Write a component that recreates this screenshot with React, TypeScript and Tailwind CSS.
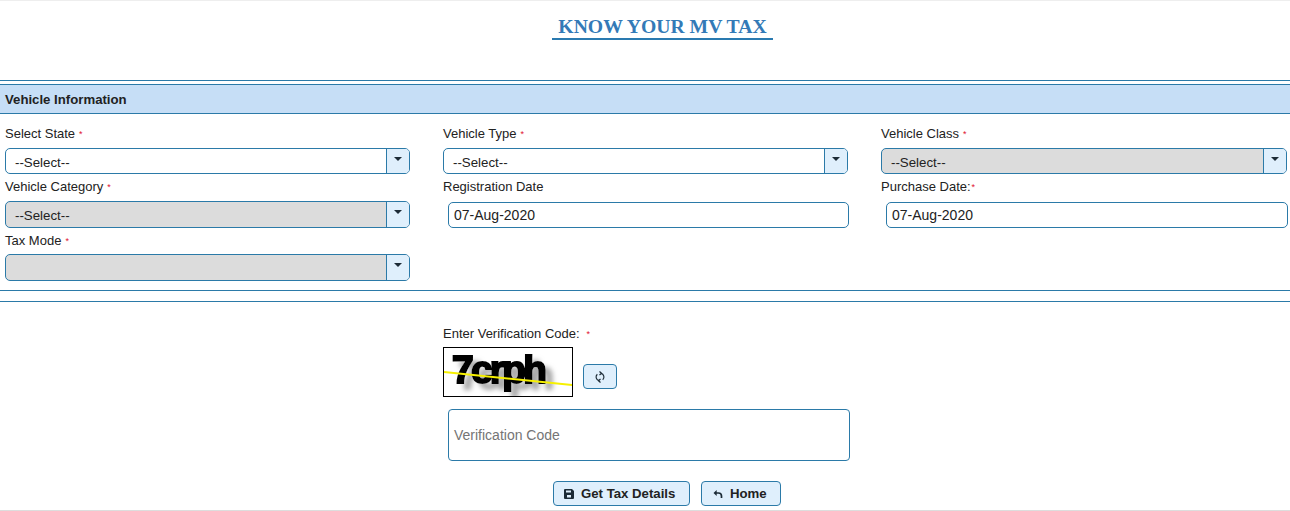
const FONT = "font-['Liberation_Sans',Arial,sans-serif]"
const BORDER = 'border-[#2b7aa8]'

function Req({ gap = 'ml-1' }: { gap?: string }) {
  return <span className={`${gap} relative -top-px text-[9px] text-[#e0102f]`}>*</span>
}

function Field({ label, required, tightStar, children }: { label: string; required?: boolean; tightStar?: boolean; children: React.ReactNode }) {
  return (
    <div>
      <label className="block h-[20px] text-[13px] leading-[20px] text-[#222]">
        {label}
        {required && <Req gap={tightStar ? 'ml-px' : 'ml-1'} />}
      </label>
      {children}
    </div>
  )
}

function SelectBox({ value, disabled, className }: { value?: string; disabled?: boolean; className: string }) {
  return (
    <div className={`flex overflow-hidden rounded-[5px] border ${BORDER} ${className} ${disabled ? 'bg-[#dcdcdc]' : 'bg-white'}`}>
      <span className="flex-1 pl-[9px] pt-[3px] text-[13.3px] leading-[22px] text-[#222]">{value}</span>
      <span className={`flex w-[23px] justify-center border-l ${BORDER} bg-[#dfeffc] pt-[8px]`}>
        <span className="h-0 w-0 border-x-[4px] border-t-[4px] border-x-transparent border-t-[#1c2b36]" />
      </span>
    </div>
  )
}

function DateBox({ value, className }: { value: string; className: string }) {
  return (
    <div className={`h-[26px] rounded-[5px] border ${BORDER} bg-white pl-[5px] text-[14px] leading-[25px] text-[#222] ${className}`}>
      {value}
    </div>
  )
}

function Captcha() {
  return (
    <svg width="130" height="50" className="block border border-black bg-white">
      <defs>
        <filter id="shade" x="-10%" y="-20%" width="125%" height="150%">
          <feDropShadow dx="7" dy="6" stdDeviation="2.500" floodColor="#a8a8a8" />
        </filter>
      </defs>
      <text x="8" y="35" fontFamily="Liberation Sans" fontWeight="bold" fontSize="39" letterSpacing="-2.800" fill="#000" stroke="#000" strokeWidth="2" filter="url(#shade)">
        7crph
      </text>
      <line x1="0" y1="24" x2="129" y2="37" stroke="#f6f000" strokeWidth="2" />
    </svg>
  )
}

export default function App() {
  return (
    <div className={`${FONT} h-[511px] w-[1290px] overflow-hidden border-t border-[#eeeeee] bg-white`}>
      <div className="flex h-[79px] justify-center pt-[14px] pl-[35px]">
        <h1 className="h-[25px] border-b-2 border-[#2a7ab0] px-[6px] font-['Liberation_Serif',serif] text-[19.700px] leading-[23px] font-bold text-[#337ab7]">
          KNOW YOUR MV TAX
        </h1>
      </div>

      <div className={`h-[4px] border-t ${BORDER}`} />
      <div className={`h-[30px] border-y ${BORDER} bg-[#c6def6] pl-[5px] text-[13.2px] leading-[29px] font-bold text-[#222]`}>
        Vehicle Information
      </div>

      <div className="grid grid-cols-[438px_438px_1fr] pt-[10px] pl-[5px]">
        <Field label="Select State" required>
          <SelectBox value="--Select--" className="mt-[4px] h-[26px] w-[405px]" />
        </Field>
        <Field label="Vehicle Type" required>
          <SelectBox value="--Select--" className="mt-[4px] h-[26px] w-[405px]" />
        </Field>
        <Field label="Vehicle Class" required>
          <SelectBox value="--Select--" disabled className="mt-[4px] h-[26px] w-[406px]" />
        </Field>

        <div className="mt-[3px]">
          <Field label="Vehicle Category" required>
            <SelectBox value="--Select--" disabled className="mt-[4px] h-[27px] w-[405px]" />
          </Field>
        </div>
        <div className="mt-[3px]">
          <Field label="Registration Date">
            <DateBox value="07-Aug-2020" className="mt-[5px] ml-[5px] w-[401px]" />
          </Field>
        </div>
        <div className="mt-[3px]">
          <Field label="Purchase Date:" required tightStar>
            <DateBox value="07-Aug-2020" className="mt-[5px] ml-[5px] w-[402px]" />
          </Field>
        </div>

        <div className="mt-[3px]">
          <Field label="Tax Mode" required>
            <SelectBox disabled className="mt-[3px] h-[27px] w-[405px]" />
          </Field>
        </div>
      </div>

      <div className={`mt-[9px] h-[12px] border-y ${BORDER}`} />

      <div className="pt-[22px] pl-[443px]">
        <label className="block h-[23px] text-[13px] leading-[20px] text-[#222]">
          Enter Verification Code:
          <Req gap="ml-[7px]" />
        </label>
        <div className="flex items-center gap-[10px]">
          <Captcha />
          <button type="button" className={`mt-[9px] flex h-[25px] w-[34px] items-center justify-center rounded-[4px] border ${BORDER} bg-[#dfeffc]`}>
            <svg width="12" height="12" viewBox="0 0 12 12" fill="none" stroke="#1c2b36" strokeWidth="1.200">
              <path d="M7 2.300A3.800 3.800 0 0 1 8.700 8.800" />
              <path d="M5 9.700A3.800 3.800 0 0 1 3.300 3.200" />
              <path d="M5.500 0.500 7.500 2.300 5.500 4" />
              <path d="M6.500 8 4.500 9.700 6.500 11.500" />
            </svg>
          </button>
        </div>
        <div className={`mt-[12px] ml-[5px] flex h-[52px] w-[402px] items-center rounded-[4px] border ${BORDER} pl-[5px] text-[14px] text-[#757575]`}>
          Verification Code
        </div>
      </div>

      <div className="flex justify-center gap-[11px] pt-[20px] pl-[44px] text-[13.2px] font-bold text-[#222]">
        <button type="button" className={`flex h-[25px] w-[137px] items-center gap-[7px] rounded-[4px] border ${BORDER} bg-[#dfeffc] pl-[10px]`}>
          <svg width="10" height="10" viewBox="0 0 10 10" fill="#1c2b36">
            <path d="M1 0h7l2 2v7a1 1 0 0 1-1 1H1a1 1 0 0 1-1-1V1a1 1 0 0 1 1-1Zm1 1.500v2h5v-2Zm1 4.500v2.500h4V6Z" fillRule="evenodd" />
          </svg>
          Get Tax Details
        </button>
        <button type="button" className={`flex h-[25px] w-[80px] items-center gap-[7px] rounded-[4px] border ${BORDER} bg-[#dfeffc] pl-[11px]`}>
          <svg width="10" height="10" viewBox="0 0 10 10" fill="none" stroke="#1c2b36" strokeWidth="1.700">
            <path d="M2 4h3.500A3 3 0 0 1 8.500 7v2" />
            <path d="M0.500 4 3.700 1V7Z" fill="#1c2b36" stroke="none" />
          </svg>
          Home
        </button>
      </div>

      <div className="mt-[4px] h-px bg-[#dddddd]" />
    </div>
  )
}
